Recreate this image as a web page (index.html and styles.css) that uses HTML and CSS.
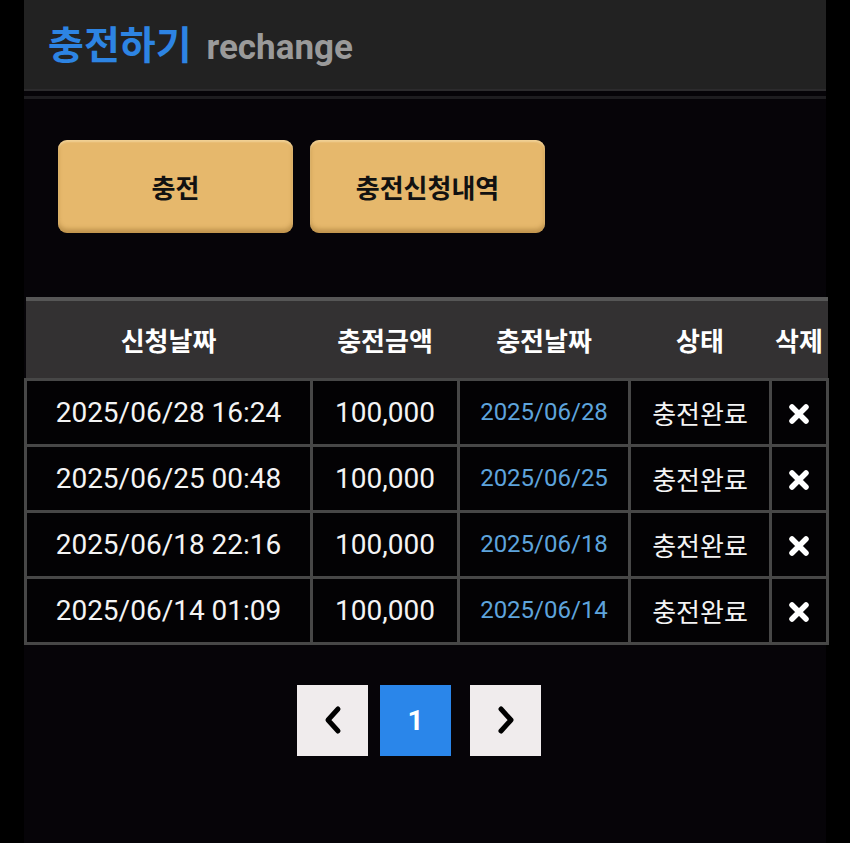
FILE: index.html
```html
<!DOCTYPE html>
<html lang="ko">
<head>
    <meta charset="UTF-8">
    <meta name="viewport" content="width=device-width, initial-scale=1.0">
    <title>충전하기</title>
    <link rel="stylesheet" href="styles.css">
</head>
<body>
    <div class="wrap">
        <div class="page-head">
            <h1 class="page-title">충전하기 <span class="page-sub">rechange</span></h1>
        </div>
        <div class="head-line"></div>

        <div class="tabs">
            <a href="#" class="tab-btn">충전</a>
            <a href="#" class="tab-btn">충전신청내역</a>
        </div>

        <table class="list">
            <colgroup>
                <col class="c-req">
                <col class="c-amt">
                <col class="c-date">
                <col class="c-state">
                <col class="c-del">
            </colgroup>
            <thead>
                <tr>
                    <th>신청날짜</th>
                    <th>충전금액</th>
                    <th>충전날짜</th>
                    <th>상태</th>
                    <th>삭제</th>
                </tr>
            </thead>
            <tbody>
                <tr>
                    <td>2025/06/28 16:24</td>
                    <td>100,000</td>
                    <td class="done-date">2025/06/28</td>
                    <td class="state">충전완료</td>
                    <td><a href="#" class="del"><svg width="22" height="22" viewBox="0 0 22 22"><path d="M4 4 L18 18 M18 4 L4 18" stroke="#fff" stroke-width="5.5" stroke-linecap="round"/></svg></a></td>
                </tr>
                <tr>
                    <td>2025/06/25 00:48</td>
                    <td>100,000</td>
                    <td class="done-date">2025/06/25</td>
                    <td class="state">충전완료</td>
                    <td><a href="#" class="del"><svg width="22" height="22" viewBox="0 0 22 22"><path d="M4 4 L18 18 M18 4 L4 18" stroke="#fff" stroke-width="5.5" stroke-linecap="round"/></svg></a></td>
                </tr>
                <tr>
                    <td>2025/06/18 22:16</td>
                    <td>100,000</td>
                    <td class="done-date">2025/06/18</td>
                    <td class="state">충전완료</td>
                    <td><a href="#" class="del"><svg width="22" height="22" viewBox="0 0 22 22"><path d="M4 4 L18 18 M18 4 L4 18" stroke="#fff" stroke-width="5.5" stroke-linecap="round"/></svg></a></td>
                </tr>
                <tr>
                    <td>2025/06/14 01:09</td>
                    <td>100,000</td>
                    <td class="done-date">2025/06/14</td>
                    <td class="state">충전완료</td>
                    <td><a href="#" class="del"><svg width="22" height="22" viewBox="0 0 22 22"><path d="M4 4 L18 18 M18 4 L4 18" stroke="#fff" stroke-width="5.5" stroke-linecap="round"/></svg></a></td>
                </tr>
            </tbody>
        </table>

        <div class="paging">
            <a href="#" class="pg pg-prev"><svg width="20" height="30" viewBox="0 0 20 30"><polyline points="15,4 5,15 15,26" fill="none" stroke="#000" stroke-width="5" stroke-linecap="round" stroke-linejoin="round"/></svg></a>
            <a href="#" class="pg pg-on">1</a>
            <a href="#" class="pg pg-next"><svg width="20" height="30" viewBox="0 0 20 30"><polyline points="5,4 15,15 5,26" fill="none" stroke="#000" stroke-width="5" stroke-linecap="round" stroke-linejoin="round"/></svg></a>
        </div>
    </div>
</body>
</html>
```

FILE: styles.css
```css
*,::before,::after {
    box-sizing: border-box;
}
body {
    margin: 0;
    padding: 0;
    background-color: #000;
    color: #fff;
    font-family: Roboto, "Noto Sans CJK KR", sans-serif;
    min-height: 843px;
}
a {
    text-decoration: none;
}
.wrap {
    width: 802px;
    margin-left: 24px;
    min-height: 843px;
    background-color: #060408;
}
.page-head {
    height: 91px;
    background-color: #222;
    border-bottom: 2px solid #2c2b2d;
    padding-left: 24px;
    display: flex;
    align-items: center;
}
.page-title {
    margin: 0;
    font-family: "Noto Sans CJK KR", sans-serif;
    font-size: 39px;
    font-weight: 700;
    color: #2d84e3;
    line-height: 1;
    padding-bottom: 2px;
}
.page-sub {
    font-family: Roboto, sans-serif;
    font-size: 35px;
    color: #9a9a9a;
    margin-left: 4px;
}
.head-line {
    height: 3px;
    margin-top: 5px;
    background-color: #1e1d20;
}
.tabs {
    display: flex;
    gap: 17px;
    padding: 41px 0 0 34px;
}
.tab-btn {
    width: 235px;
    height: 93px;
    display: flex;
    align-items: center;
    justify-content: center;
    background-color: #e6b86c;
    border-radius: 9px;
    box-shadow: inset 0 2px 2px rgba(255, 240, 200, 0.45), inset 0 -4px 4px rgba(120, 80, 20, 0.35);
    color: #111;
    font-family: "Noto Sans CJK KR", sans-serif;
    font-size: 26px;
    font-weight: 700;
}
.list {
    width: 802px;
    margin-top: 64px;
    border-collapse: collapse;
    table-layout: fixed;
}
.c-req { width: 286px; }
.c-amt { width: 147px; }
.c-date { width: 171px; }
.c-state { width: 141px; }
.c-del { width: 57px; }
.list th {
    height: 80px;
    padding: 0;
    background-color: #333132;
    border-top: 4px solid #565656;
    font-family: "Noto Sans CJK KR", sans-serif;
    font-size: 26px;
    font-weight: 700;
    color: #fff;
    text-align: center;
}
.list td {
    height: 66px;
    padding: 0;
    border: 3px solid #474747;
    background-color: #030204;
    text-align: center;
    font-size: 28px;
    color: #f4f4f4;
}
.list td.done-date {
    font-size: 24px;
    color: #5ea4dc;
}
.list td.state {
    font-family: "Noto Sans CJK KR", sans-serif;
    font-size: 26px;
}
.del {
    display: inline-flex;
    vertical-align: middle;
}
.paging {
    display: flex;
    justify-content: center;
    margin-top: 40px;
    padding-right: 12px;
}
.pg {
    width: 71px;
    height: 71px;
    display: flex;
    align-items: center;
    justify-content: center;
    background-color: #f0eced;
}
.pg-on {
    margin: 0 19px 0 12px;
    background-color: #2a86ea;
    color: #fff;
    font-family: Roboto, sans-serif;
    font-size: 28px;
    font-weight: 700;
}
```
